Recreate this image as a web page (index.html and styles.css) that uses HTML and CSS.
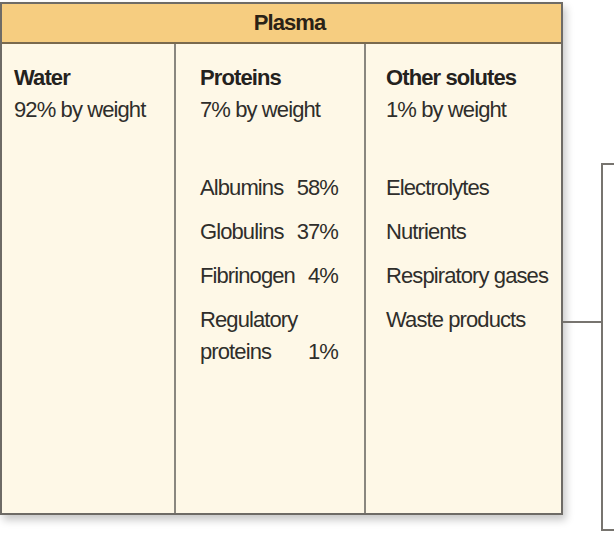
FILE: index.html
```html
<!DOCTYPE html>
<html lang="en">
<head>
<meta charset="utf-8">
<title>Plasma</title>
<link rel="stylesheet" href="styles.css">
</head>
<body>
<div class="diagram">
  <div class="table">
    <div class="head">Plasma</div>
    <div class="cols">
      <div class="col col-water">
        <div class="title">Water</div>
        <div class="sub">92% by weight</div>
      </div>
      <div class="col col-proteins">
        <div class="title">Proteins</div>
        <div class="sub">7% by weight</div>
        <ul class="list">
          <li class="prow"><span>Albumins</span><span class="pct">58%</span></li>
          <li class="prow"><span>Globulins</span><span class="pct">37%</span></li>
          <li class="prow"><span>Fibrinogen</span><span class="pct">4%</span></li>
          <li class="prow"><span class="wrapname">Regulatory proteins</span><span class="pct">1%</span></li>
        </ul>
      </div>
      <div class="col col-solutes">
        <div class="title">Other solutes</div>
        <div class="sub">1% by weight</div>
        <ul class="list">
          <li>Electrolytes</li>
          <li>Nutrients</li>
          <li>Respiratory gases</li>
          <li>Waste products</li>
        </ul>
      </div>
    </div>
  </div>
  <div class="connector"></div>
  <div class="bracket"></div>
</div>
</body>
</html>
```

FILE: styles.css
```css
html, body {
  margin: 0;
  padding: 0;
  background: #ffffff;
}

body {
  font-family: "Liberation Sans", Arial, sans-serif;
  font-size: 22px;
  letter-spacing: -0.9px;
  line-height: 32px;
  color: #2f2e2b;
}

.diagram {
  display: flex;
  align-items: flex-start;
  padding-top: 2px;
}

.table {
  width: 563px;
  height: 513px;
  box-sizing: border-box;
  border: 2px solid #6e6b66;
  background: #fef8e7;
  display: flex;
  flex-direction: column;
  box-shadow: 3px 5px 8px rgba(0, 0, 0, 0.22);
  flex: none;
}

.head {
  height: 38px;
  border-bottom: 2px solid #7a6a4e;
  background: #f6cd80;
  text-align: center;
  font-weight: bold;
  color: #2a2216;
  line-height: 38px;
  padding-left: 16px;
}

.cols {
  flex: 1;
  display: grid;
  grid-template-columns: 172px 190px 1fr;
}

.col {
  box-sizing: border-box;
  padding-top: 18px;
}

.col-water {
  padding-left: 12px;
}

.col-proteins {
  border-left: 2px solid #8a877f;
  padding-left: 24px;
  padding-right: 26px;
}

.col-solutes {
  border-left: 2px solid #8a877f;
  padding-left: 20px;
}

.title {
  font-weight: bold;
  color: #24221e;
}

.list {
  list-style: none;
  margin: 46px 0 0 0;
  padding: 0;
  display: flex;
  flex-direction: column;
  gap: 12px;
}

.prow {
  display: grid;
  grid-template-columns: 1fr auto;
}

.wrapname {
  width: 100px;
}

.pct {
  align-self: end;
  text-align: right;
}

.connector {
  width: 38px;
  margin-top: 319px;
  border-top: 2px solid #77746f;
  flex: none;
}

.bracket {
  width: 20px;
  height: 368px;
  margin-top: 161px;
  box-sizing: border-box;
  border: 2px solid #77746f;
  border-right: none;
  flex: none;
}
```
